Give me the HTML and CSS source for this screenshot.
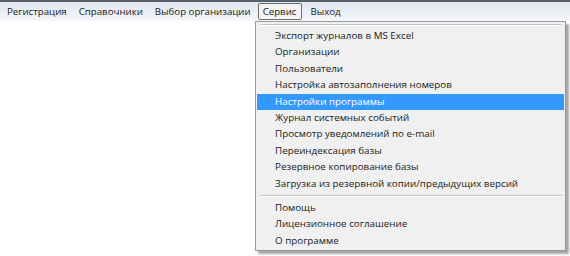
FILE: index.html
```html
<!DOCTYPE html>
<html lang="ru">
<head>
  <meta charset="UTF-8" />
  <title>Сервис</title>
  <link rel="stylesheet" href="styles.css">
</head>
<body>
  <div class="window">
    <div class="menubar">
      <span class="menu-item">Регистрация</span>
      <span class="menu-item">Справочники</span>
      <span class="menu-item">Выбор организации</span>
      <span class="menu-item open">Сервис</span>
      <span class="menu-item">Выход</span>
    </div>
    <div class="dropdown">
      <div class="sep top"></div>
      <div class="row">Экспорт журналов в MS Excel</div>
      <div class="row">Организации</div>
      <div class="row">Пользователи</div>
      <div class="row">Настройка автозаполнения номеров</div>
      <div class="row active">Настройки программы</div>
      <div class="row">Журнал системных событий</div>
      <div class="row">Просмотр уведомлений по e-mail</div>
      <div class="row">Переиндексация базы</div>
      <div class="row">Резервное копирование базы</div>
      <div class="row">Загрузка из резервной копии/предыдущих версий</div>
      <div class="sep"></div>
      <div class="row">Помощь</div>
      <div class="row">Лицензионное соглашение</div>
      <div class="row">О программе</div>
    </div>
  </div>
</body>
</html>
```

FILE: styles.css
```css
body {
  margin: 0;
  background: #ffffff;
  font-family: 'Open Sans', 'Noto Sans', sans-serif;
  font-size: 9.7px;
  color: #1a1a1a;
}

.window {
  position: relative;
  height: 256px;
  overflow: hidden;
}

.menubar {
  display: flex;
  align-items: flex-end;
  height: 18px;
  padding: 0 0 1px 1px;
  border-top: 2px solid #56606c;
  background: linear-gradient(#e1e6ee, #f5f7fa);
}

.menu-item {
  padding: 0 5px;
  line-height: 15px;
  border: 1px solid transparent;
  white-space: nowrap;
}

.menu-item.open {
  padding: 0 4px;
  margin: 0 3px 0 1px;
  border-color: #6f6f6f;
  border-radius: 2px;
  background: #f3f3f3;
}

.dropdown {
  position: absolute;
  z-index: 2;
  top: 21px;
  left: 255px;
  width: 307px;
  padding: 0 1px 1px;
  background: #f0f0f0;
  border: 1px solid #979797;
  box-shadow: 3px 3px 2px rgba(0, 0, 0, 0.35);
  font-size: 9.8px;
}

.sep {
  height: 1px;
  margin: 3px 2px 3px 3px;
  background: #c5c5c5;
  border-bottom: 1px solid #ffffff;
}

.sep.top {
  margin: 2px 2px 2px 3px;
}

.row {
  height: 16.4px;
  line-height: 16.4px;
  padding-left: 18px;
  white-space: nowrap;
}

.row.active {
  background: #3399ff;
  color: #ffffff;
}
```
